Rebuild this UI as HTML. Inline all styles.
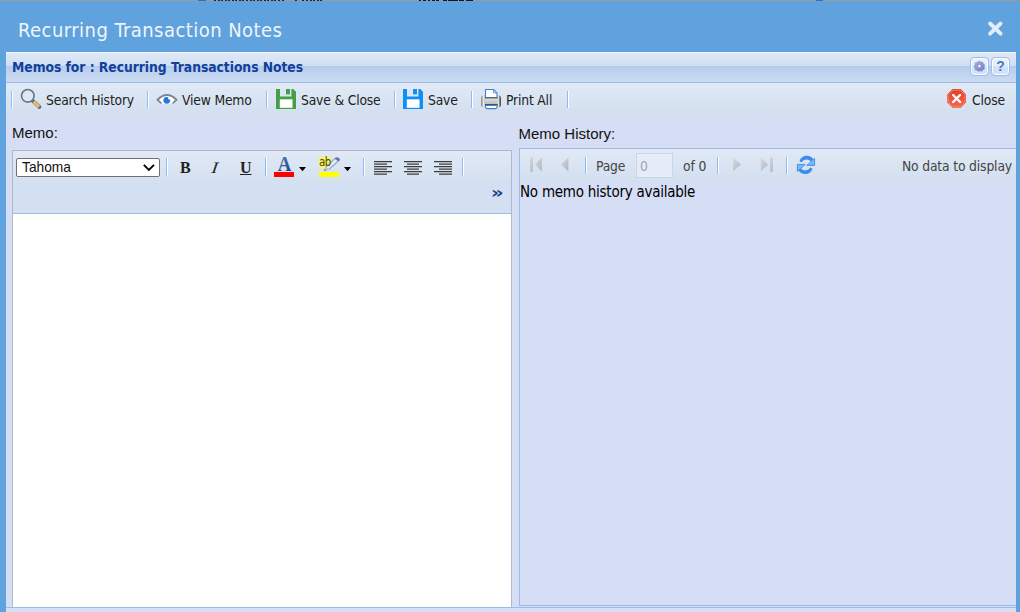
<!DOCTYPE html>
<html lang="en">
<head>
<meta charset="utf-8">
<title>Recurring Transaction Notes</title>
<style>
html,body{margin:0;padding:0;}
body{width:1020px;height:612px;overflow:hidden;position:relative;background:#5fa2dd;
  font-family:"DejaVu Sans Condensed","Liberation Sans",sans-serif;color:#222;}
.abs{position:absolute;}
svg{position:absolute;overflow:visible;}
#topline{left:0;top:0;width:1020px;height:1px;background:#9a9a9a;}
#topline i{position:absolute;top:0;height:1px;background:#2a2a2a;}
#title{left:18px;top:16px;height:28px;line-height:28px;font-size:20px;letter-spacing:0.45px;color:#f1f5fb;white-space:nowrap;}
#xbtn{left:986px;top:20px;width:18px;height:18px;}
#win{left:6px;top:52px;width:1010px;height:560px;background:#d6def6;}
#phead{left:0;top:0;width:1010px;height:31px;box-sizing:border-box;border-top:1px solid #f4f7fc;border-bottom:1px solid #99bbe8;
  background:linear-gradient(#dee9f6 0px,#d0dff3 13px,#adc7ec 13px,#b8ceee 14.5px,#cbdbf2 29px);}
#phead span{position:absolute;left:6px;top:5px;line-height:19px;font-size:13.75px;font-weight:bold;color:#11409a;white-space:nowrap;letter-spacing:-0.04px;}
.tool{position:absolute;top:4px;width:19px;height:19px;border:1px solid #9cbdec;border-radius:4px;box-sizing:border-box;
  background:linear-gradient(#e9f1fc 0px,#e3edfb 8px,#cfe0f9 9px,#d4e4fb 17px);box-shadow:inset 0 0 0 1px rgba(255,255,255,.85);}
#tbar{left:0;top:31px;width:1010px;height:33px;background:linear-gradient(#e1e9f5,#d2dff0);}
.sep{position:absolute;width:1px;height:17px;background:#8fbaf5;border-right:1px solid #fff;}
.btxt{position:absolute;font-size:13.75px;line-height:20px;color:#222;white-space:nowrap;letter-spacing:-0.17px;}
.lbl{position:absolute;font-family:"Liberation Sans",sans-serif;font-size:15px;line-height:18px;color:#111;white-space:nowrap;}
#edtb{left:6px;top:98px;width:500px;height:64px;box-sizing:border-box;border:1px solid #b3b6c8;border-bottom-color:#99bbe8;
  background:linear-gradient(#e1e9f5 0px,#d3e0f1 33px,#d3e0f1 100%);}
#edarea{left:6px;top:162px;width:500px;height:393px;box-sizing:border-box;background:#fff;border-left:1px solid #b5b8c8;border-right:1px solid #b5b8c8;}
#sel{left:3px;top:7px;width:144px;height:19px;box-sizing:border-box;border:1px solid #707070;border-radius:2px;background:#fff;
  font-family:"Liberation Sans",sans-serif;font-size:13.75px;line-height:17px;color:#111;padding-left:5px;}
.eb{position:absolute;font-family:"Liberation Serif",serif;font-weight:bold;color:#222;font-size:16px;line-height:20px;}
#grid{left:513px;top:96px;width:497px;height:458px;box-sizing:border-box;border:1px solid #99bbe8;border-right:0;background:#d6def6;}
#pgbar{left:0;top:0;width:496px;height:33px;background:linear-gradient(#e1e9f5,#d2dff0);}
#pgin{left:116px;top:4px;width:37px;height:25px;box-sizing:border-box;border:1px solid #c9d5e8;background:#e6ecf8;color:#a0a4ac;font-size:13.75px;line-height:25px;padding-left:3px;}
.gtxt{position:absolute;font-size:13.75px;line-height:20px;color:#444;white-space:nowrap;letter-spacing:-0.15px;}
#botline{left:0;top:555px;width:1010px;height:1px;background:#99bbe8;}
</style>
</head>
<body>
<div id="topline" class="abs"><i style="left:198px;width:8px;background:#3f6fa5"></i><i style="left:816px;width:7px;background:#3f6fa5"></i><i style="left:214px;width:2px;background:#2a2420"></i><i style="left:217.6px;width:2px;background:#2a2420"></i><i style="left:221.1px;width:2px;background:#2a2420"></i><i style="left:224.7px;width:2px;background:#2a2420"></i><i style="left:228.2px;width:2px;background:#2a2420"></i><i style="left:231.8px;width:2px;background:#2a2420"></i><i style="left:235.3px;width:2px;background:#2a2420"></i><i style="left:238.9px;width:2px;background:#2a2420"></i><i style="left:242.4px;width:2px;background:#2a2420"></i><i style="left:246.0px;width:2px;background:#2a2420"></i><i style="left:249.5px;width:2px;background:#2a2420"></i><i style="left:253.1px;width:2px;background:#2a2420"></i><i style="left:256.6px;width:2px;background:#2a2420"></i><i style="left:260.2px;width:2px;background:#2a2420"></i><i style="left:263.7px;width:2px;background:#2a2420"></i><i style="left:267.3px;width:2px;background:#2a2420"></i><i style="left:270.8px;width:2px;background:#2a2420"></i><i style="left:274.4px;width:2px;background:#2a2420"></i><i style="left:277.9px;width:2px;background:#2a2420"></i><i style="left:281.5px;width:2px;background:#2a2420"></i><i style="left:295px;width:2px;background:#2a2420"></i><i style="left:302.4px;width:2px;background:#2a2420"></i><i style="left:306.0px;width:2px;background:#2a2420"></i><i style="left:309.6px;width:2px;background:#2a2420"></i><i style="left:313.2px;width:2px;background:#2a2420"></i><i style="left:316.8px;width:2px;background:#2a2420"></i><i style="left:320.4px;width:2px;background:#2a2420"></i><i style="left:419px;width:2px;background:#1a1410"></i><i style="left:423px;width:3px;background:#1a1410"></i><i style="left:428px;width:2px;background:#1a1410"></i><i style="left:432px;width:3px;background:#1a1410"></i><i style="left:436px;width:3px;background:#1a1410"></i><i style="left:443px;width:4px;background:#1a1410"></i><i style="left:448px;width:10px;background:#1a1410"></i><i style="left:459px;width:5px;background:#1a1410"></i><i style="left:466px;width:7px;background:#1a1410"></i></div>
<div id="title" class="abs">Recurring Transaction Notes</div>
<svg id="xbtn" viewBox="0 0 18 18"><path d="M4.1 3.5 L14.6 13.6 M14.6 3.5 L4.1 13.6" stroke="#e3edf8" stroke-width="3.9" stroke-linecap="round" fill="none"/></svg>

<div id="win" class="abs">
  <div id="phead" class="abs"><span>Memos for : Recurring Transactions Notes</span>
    <div class="tool" style="left:964px"></div>
    <div class="tool" style="left:985px"></div>
  </div>
  <div id="tbar" class="abs">
    <div class="sep" style="left:5px;top:8px"></div>
    <div class="btxt" style="left:40px;top:7px">Search History</div>
    <div class="sep" style="left:141px;top:8px"></div>
    <div class="btxt" style="left:176px;top:7px">View Memo</div>
    <div class="sep" style="left:260px;top:8px"></div>
    <div class="btxt" style="left:295px;top:7px">Save &amp; Close</div>
    <div class="sep" style="left:388px;top:8px"></div>
    <div class="btxt" style="left:422px;top:7px">Save</div>
    <div class="sep" style="left:465px;top:8px"></div>
    <div class="btxt" style="left:500px;top:7px">Print All</div>
    <div class="sep" style="left:561px;top:8px"></div>
    <div class="btxt" style="left:966px;top:7px">Close</div>
  </div>
  <div class="lbl" style="left:6px;top:72px">Memo:</div>
  <div class="lbl" style="left:512.5px;top:73px">Memo History:</div>
  <div id="edtb" class="abs">
    <div id="sel" class="abs">Tahoma</div>
    <div class="sep" style="left:153px;top:7px;height:18px"></div>
    <div class="eb" style="left:167px;top:7px">B</div>
    <div class="eb" style="left:198.5px;top:7px;font-style:italic;font-weight:normal;transform:skewX(-8deg) scaleX(1.15)">I</div>
    <div class="eb" style="left:227px;top:7px;text-decoration:underline">U</div>
    <div class="sep" style="left:252px;top:7px;height:18px"></div>
    <div class="sep" style="left:350px;top:7px;height:18px"></div>
    <div class="sep" style="left:449px;top:7px;height:18px"></div>
    <div class="abs" style="left:478px;top:32px;font-family:'DejaVu Sans',sans-serif;font-size:16px;line-height:20px;font-weight:bold;color:#1c3f8c;transform:scaleX(1.22);transform-origin:0 0">»</div>
  </div>
  <div id="edarea" class="abs"></div>
  <div id="grid" class="abs">
    <div id="pgbar" class="abs">
      <div class="sep" style="left:65px;top:8px"></div>
      <div class="gtxt" style="left:76px;top:7px">Page</div>
      <div id="pgin" class="abs">0</div>
      <div class="gtxt" style="left:163px;top:7px">of 0</div>
      <div class="sep" style="left:197px;top:8px"></div>
      <div class="sep" style="left:266px;top:8px"></div>
      <div class="gtxt" style="right:4px;top:7px">No data to display</div>
    </div>
    <div class="abs" style="left:0px;top:33px;font-size:15px;line-height:20px;color:#000;white-space:nowrap;letter-spacing:-0.25px">No memo history available</div>
  </div>
  <div id="botline" class="abs"></div>
</div>

<div id="icons" class="abs" style="left:0;top:0;width:1020px;height:612px;pointer-events:none">
<svg width="1020" height="612" viewBox="0 0 1020 612" style="left:0;top:0">
  <defs>
    <linearGradient id="gA" x1="0" y1="0" x2="0" y2="1"><stop offset="0" stop-color="#5a7fc4"/><stop offset="1" stop-color="#1d3a75"/></linearGradient>
    <linearGradient id="gPr" x1="0" y1="0" x2="1" y2="0"><stop offset="0" stop-color="#909090"/><stop offset=".06" stop-color="#a8a8a8"/><stop offset=".13" stop-color="#ececec"/><stop offset=".22" stop-color="#b0b0b0"/><stop offset=".78" stop-color="#b0b0b0"/><stop offset=".87" stop-color="#ececec"/><stop offset=".94" stop-color="#6a6a6a"/><stop offset="1" stop-color="#444"/></linearGradient>
    <linearGradient id="gPr2" x1="0" y1="0" x2="0" y2="1"><stop offset="0" stop-color="#dedede"/><stop offset="1" stop-color="#bcbcbc"/></linearGradient>
    <linearGradient id="gRed" x1="0" y1="0" x2="0" y2="1"><stop offset="0" stop-color="#e23a20"/><stop offset="1" stop-color="#f46c55"/></linearGradient>
    <linearGradient id="gGear" x1="0" y1="0" x2="1" y2="1"><stop offset="0" stop-color="#a9afe4"/><stop offset="1" stop-color="#747cc4"/></linearGradient>
    <linearGradient id="gTri" x1="0" y1="0" x2="1" y2="1"><stop offset="0" stop-color="#d8dbe0"/><stop offset="1" stop-color="#b0b4bb"/></linearGradient>
    <linearGradient id="gPen" x1="0" y1="0" x2="1" y2="1"><stop offset="0" stop-color="#dfe7f3"/><stop offset="1" stop-color="#6f8fbd"/></linearGradient>
  </defs>
  <!-- magnifier -->
  <g>
    <line x1="32.2" y1="100.4" x2="39.4" y2="107" stroke="#5c6c8c" stroke-width="4" stroke-linecap="round"/>
    <line x1="33.6" y1="101.7" x2="39.1" y2="106.7" stroke="#ecb864" stroke-width="3.2"/>
    <circle cx="27.8" cy="95.8" r="6.3" fill="#e2e6ee" stroke="#62728f" stroke-width="1.6"/>
  </g>
  <!-- eye -->
  <g>
    <path d="M157.6 99.6 Q167 90.6 176.4 99.6 L173 103 Q167 104.8 161 103 Z" fill="#fff"/>
    <path d="M157.6 99.8 Q167 90.4 176.4 99.8" fill="none" stroke="#7b8594" stroke-width="2" stroke-linecap="round"/>
    <path d="M157.6 99.8 L160.8 102.8 M176.4 99.8 L173.2 102.8" fill="none" stroke="#7b8594" stroke-width="1.8" stroke-linecap="round"/>
    <circle cx="166.8" cy="100.3" r="3.4" fill="#2579dc"/>
    <circle cx="169.3" cy="98.2" r="1.2" fill="#fff"/>
  </g>
  <!-- floppy green -->
  <g>
    <path d="M276 89 H280 V96.6 H291.4 V89 H293.2 L296 91.8 V109 H276 Z" fill="#43a047"/>
    <rect x="286" y="89" width="4" height="5.4" fill="#43a047"/>
    <rect x="279.8" y="99.3" width="12.7" height="8.5" fill="#fff"/>
  </g>
  <!-- floppy blue -->
  <g>
    <path d="M403 89 H407 V96.6 H418.4 V89 H420.2 L423 91.8 V109 H403 Z" fill="#0e8ff6"/>
    <rect x="413" y="89" width="4" height="5.4" fill="#0e8ff6"/>
    <rect x="406.8" y="99.3" width="12.7" height="8.5" fill="#fff"/>
  </g>
  <!-- printer -->
  <g>
    <rect x="481" y="95.2" width="20" height="12.4" rx="3" ry="3" fill="url(#gPr)"/>
    <path d="M485.5 97.6 V89.5 H493.6 L497 92.9 V97.6 Z" fill="#fff" stroke="#3f80d2" stroke-width="1.1"/>
    <path d="M493.6 89.5 V92.9 H497 Z" fill="#c6daf3" stroke="#3f80d2" stroke-width="0.7"/>
    <rect x="485" y="97.4" width="12.6" height="1.1" fill="#5a5a5a"/>
    <rect x="485.3" y="98.6" width="12" height="5.6" fill="url(#gPr2)"/>
    <rect x="485" y="104.2" width="12.6" height="1.2" fill="#2c2c2c"/>
    <path d="M485.6 105.4 V107.6 L486.8 108.6 H495.8 L497 107.6 V105.4 Z" fill="#fff" stroke="#3f80d2" stroke-width="1.1"/>
  </g>
  <!-- close -->
  <g>
    <path d="M952.6 89 H960.6 L966 94.4 V102.6 L960.6 108 H952.6 L947.2 102.6 V94.4 Z" fill="url(#gRed)"/>
    <path d="M952.8 90.2 H960.2 L964.8 94.8 V102.2 L960.2 106.8 H952.8 L948.4 102.2 V94.8 Z" fill="none" stroke="#f58a74" stroke-width="0.8"/>
    <path d="M953.1 95 L960.1 102 M960.1 95 L953.1 102" stroke="#fff" stroke-width="2.4" stroke-linecap="round"/>
  </g>
  <!-- gear -->
  <g transform="translate(979.4 66.3) scale(0.93)">
    <path d="M0 -5.8 L1.6 -4.4 L3.6 -4.6 L4.2 -2.6 L5.8 -1.4 L5 0.6 L5.6 2.6 L3.8 3.6 L2.8 5.4 L0.8 4.8 L-1.2 5.6 L-2.6 4.2 L-4.6 3.8 L-4.6 1.8 L-5.8 0 L-4.6 -1.8 L-4.4 -3.8 L-2.4 -4.2 Z" fill="url(#gGear)" stroke="#7a80c8" stroke-width="0.5"/>
    <circle cx="0" cy="-0.2" r="1.3" fill="#fff"/>
  </g>
  <path d="M143.8 164.9 L148.9 169.9 L154 164.9" fill="none" stroke="#000" stroke-width="1.9"/>
  <!-- editor: font color -->
  <rect x="274" y="172" width="20" height="5" fill="#ff0000"/>
  <path d="M299 167 H306 L302.5 171.2 Z" fill="#000"/>
  <!-- highlight -->
  <rect x="319" y="157" width="12.5" height="11" fill="#f6f66a"/>
  <rect x="319" y="172" width="20" height="5" fill="#ffff00"/>
  <path d="M335.4 157.6 L339.4 160.8 L329.2 170 L325.4 166.8 Z" fill="#8aa5cf"/>
  <path d="M335.2 159.2 L337.4 161 L328.4 169 L326.4 167.2 Z" fill="#e8eef7"/>
  <path d="M334.6 158.2 Q337.4 155.8 339.8 158.8 Q340.4 160.2 339 161.4 Z" fill="#5a7bad"/>
  <path d="M325.6 166.6 L329.2 169.8 L323.8 170.8 Z" fill="#d8c28a"/>
  <path d="M323.6 170.9 L325 169 L326.4 170.4 Z" fill="#8a7a58"/>
  <path d="M344 167 H351 L347.5 171.2 Z" fill="#000"/>
  <!-- align -->
  <g stroke="#3c3c3c" stroke-width="1.3">
    <path d="M374 161.6 H392 M374 164.1 H387 M374 166.6 H392 M374 169.1 H387 M374 171.6 H392 M374 174.1 H387"/>
    <path d="M404 161.6 H422 M407 164.1 H419 M404 166.6 H422 M407 169.1 H419 M404 171.6 H422 M407 174.1 H419"/>
    <path d="M434 161.6 H452 M439 164.1 H452 M434 166.6 H452 M439 169.1 H452 M434 171.6 H452 M439 174.1 H452"/>
  </g>
  <!-- paging -->
  <g fill="url(#gTri)">
    <rect x="530" y="157.8" width="2.8" height="14" />
    <path d="M535 164.6 L541.8 157.6 V171.4 Z"/>
    <path d="M561 164.6 L568.4 157.6 V171.4 Z"/>
    <path d="M741 164.4 L733 157.6 V171.2 Z"/>
    <path d="M768 164.6 L760.8 157.6 V171.4 Z"/>
    <rect x="769.8" y="157.8" width="3" height="14"/>
  </g>
  <!-- refresh -->
  <g id="rf">
    <path d="M799.6 161.4 C800.4 157.6 803.4 155.8 806.8 155.8 C809.8 155.8 812.2 157.2 813.4 159.4 L810.6 161.4 C809.8 160.2 808.4 159.4 806.6 159.4 C804.4 159.4 802.8 160.4 801.8 162.2 Z" fill="#3a8eea"/>
    <path d="M814.6 158.4 V165.4 H806.8 Z" fill="#79b9f6" stroke="#3a8be6" stroke-width="0.9" stroke-linejoin="round"/>
  </g>
  <use href="#rf" transform="rotate(180 806 164.9)"/>
</svg>
<div class="abs" style="left:992px;top:57.5px;width:17px;height:17px;text-align:center;font-family:'Liberation Sans',sans-serif;font-weight:bold;font-size:14px;line-height:17px;color:#4a7ab2">?</div>
<svg width="20" height="18" viewBox="0 0 20 18" style="left:274px;top:155px"><text x="0" y="16" text-anchor="middle" transform="translate(10.6 0) scale(0.89 1)" font-family="Liberation Serif,serif" font-weight="bold" font-size="21.2" fill="url(#gA)">A</text></svg>
<div class="abs" style="left:319px;top:156px;width:13px;height:13px;font-size:11.5px;line-height:13px;color:#4a4a05;letter-spacing:-0.5px;">ab</div>
</div>
</body>
</html>
